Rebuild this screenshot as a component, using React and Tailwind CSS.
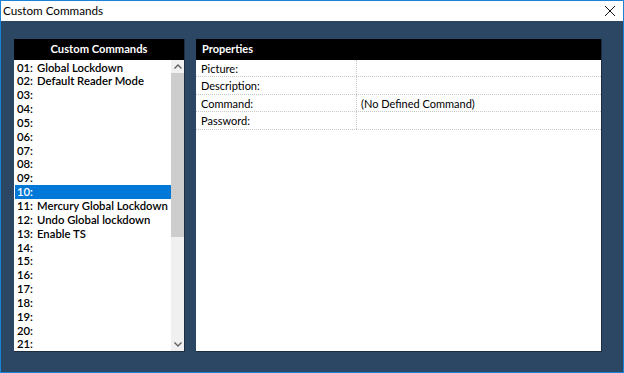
import React from "react";

const commands = [
  "Global Lockdown",
  "Default Reader Mode",
  "", "", "", "", "", "", "", "",
  "Mercury Global Lockdown",
  "Undo Global lockdown",
  "Enable TS",
  "", "", "", "", "", "", "", "",
];

const props = [
  { label: "Picture:", value: "" },
  { label: "Description:", value: "" },
  { label: "Command:", value: "(No Defined Command)" },
  { label: "Password:", value: "" },
];

const App = () => {
  const selected = 9;

  return (
    <div
      className="w-[624px] h-[373px] flex flex-col border border-[#1883d7] bg-[#2b4764] text-black"
      style={{ fontFamily: 'Lato, "Open Sans", sans-serif' }}
    >
      {/* Title bar */}
      <div className="h-[21px] bg-white flex items-center justify-between pl-[2px] pr-[6px]">
        <span className="text-[11.7px] leading-none">Custom Commands</span>
        <svg width="12" height="12" viewBox="0 0 12 12" className="mr-[1px]">
          <path d="M1 1 L11 11 M11 1 L1 11" stroke="#111" strokeWidth="1" />
        </svg>
      </div>

      <div className="flex-1 flex pt-[18px] pb-[20px] pl-[13px] pr-[21px] gap-[11px]">
        {/* Left: command list */}
        <div className="w-[171px] shrink-0 flex flex-col bg-white border-r border-b border-[#1c2e40] overflow-hidden">
          <div className="h-[21px] bg-black text-white text-[11.2px] font-bold flex items-center justify-center">
            Custom Commands
          </div>
          <div className="flex-1 flex min-w-0">
            <div className="flex-1 min-w-0 flex flex-col pl-[1px] pt-[0.5px]">
              {commands.map((name, i) => {
                const num = String(i + 1).padStart(2, "0");
                return (
                  <div
                    key={num}
                    className={
                      "h-[13.85px] flex items-center pl-[2px] text-[11.3px] font-semibold leading-none whitespace-nowrap " +
                      (i === selected ? "bg-[#0078d7] text-white" : "")
                    }
                  >
                    <span className="w-[20px] shrink-0">{num}:</span>
                    {name && <span>{name}</span>}
                  </div>
                );
              })}
            </div>
            {/* Scrollbar */}
            <div className="w-[13px] shrink-0 flex flex-col bg-[#f0f0f0]">
              <div className="h-[13px] flex items-center justify-center">
                <svg width="8" height="5" viewBox="0 0 8 5">
                  <path d="M0.5 4.5 L4 1 L7.5 4.5" stroke="#606060" strokeWidth="1.4" fill="none" />
                </svg>
              </div>
              <div className="h-[164px] bg-[#cdcdcd]" />
              <div className="flex-1" />
              <div className="h-[13px] flex items-center justify-center">
                <svg width="8" height="5" viewBox="0 0 8 5">
                  <path d="M0.5 0.5 L4 4 L7.5 0.5" stroke="#606060" strokeWidth="1.4" fill="none" />
                </svg>
              </div>
            </div>
          </div>
        </div>

        {/* Right: properties grid */}
        <div className="flex-1 flex flex-col bg-white border-r border-b border-[#1c2e40]">
          <div className="h-[21px] bg-black text-white text-[11px] font-bold flex items-center pl-[6px]">
            Properties
          </div>
          {props.map((p) => (
            <div
              key={p.label}
              className="h-[17.5px] flex border-b border-dotted border-[#c8c8c8] text-[11px] leading-none"
            >
              <div className="w-[161px] flex items-center pl-[5px] border-r border-dotted border-[#c8c8c8]">
                {p.label}
              </div>
              <div className="flex-1 flex items-center pl-[4px]">{p.value}</div>
            </div>
          ))}
        </div>
      </div>
    </div>
  );
};

export default App;
